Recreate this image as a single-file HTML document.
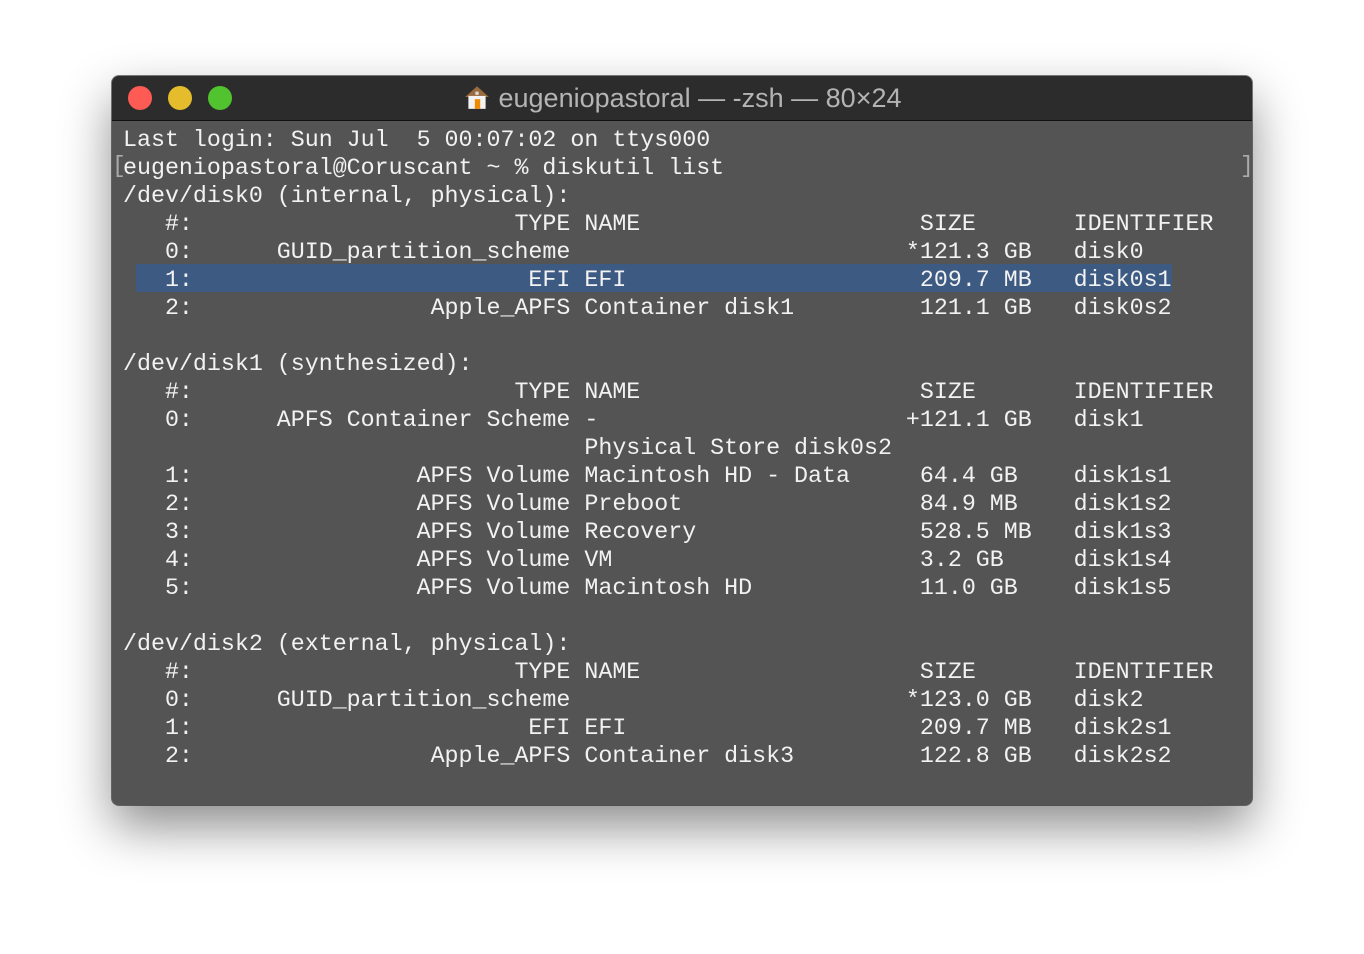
<!DOCTYPE html>
<html><head><meta charset="utf-8"><style>
body{margin:0;width:1364px;height:954px;background:#fff;position:relative;overflow:hidden}
.win{position:absolute;left:112px;top:76px;width:1140px;height:729px;background:#545454;border-radius:7px;overflow:hidden;box-shadow:0 22px 50px rgba(0,0,0,.45),0 0 0 1px rgba(0,0,0,.5)}
.tb{position:absolute;left:0;top:0;width:100%;height:44px;background:#2c2c2c;border-bottom:1px solid #111}
.dot{position:absolute;top:10px;width:24px;height:24px;border-radius:50%}
.title{position:absolute;left:0;right:0;top:7px;text-align:center;font:27px "Liberation Sans",sans-serif;color:#b4b4b4;white-space:nowrap}
pre{position:absolute;left:11px;top:50px;margin:0;font:23.3px/28px "Liberation Mono",monospace;color:#f2f2f2}
.hl{position:absolute;left:24px;top:188px;width:1036px;height:28px;background:#3d5a83}
.br{position:absolute;font:23px/28px "Liberation Mono",monospace;color:#aaa}
</style></head><body>
<div class="win">
<div class="tb">
<div class="dot" style="left:16px;background:#fd5b54"></div>
<div class="dot" style="left:56px;background:#e5bd2c"></div>
<div class="dot" style="left:96px;background:#51c32f"></div>
<div class="title"><svg width="28" height="28" viewBox="0 0 26 26" style="vertical-align:-4px;margin-right:8px"><path d="M2 13 L13 3 L24 13 Z" fill="#9a6b3c"/><rect x="5" y="12" width="16" height="12" fill="#f3f3f3"/><rect x="11" y="15" width="5" height="9" fill="#f08a00"/><rect x="11.5" y="8" width="3" height="3" fill="#ddd"/></svg>eugeniopastoral — -zsh — 80×24</div>
</div>
<div class="hl"></div>
<div class="br" style="left:0;top:76px">[</div>
<div class="br" style="left:1128px;top:76px">]</div>
<pre>Last login: Sun Jul  5 00:07:02 on ttys000
eugeniopastoral@Coruscant ~ % diskutil list
/dev/disk0 (internal, physical):
   #:                       TYPE NAME                    SIZE       IDENTIFIER
   0:      GUID_partition_scheme                        *121.3 GB   disk0
   1:                        EFI EFI                     209.7 MB   disk0s1
   2:                 Apple_APFS Container disk1         121.1 GB   disk0s2

/dev/disk1 (synthesized):
   #:                       TYPE NAME                    SIZE       IDENTIFIER
   0:      APFS Container Scheme -                      +121.1 GB   disk1
                                 Physical Store disk0s2
   1:                APFS Volume Macintosh HD - Data     64.4 GB    disk1s1
   2:                APFS Volume Preboot                 84.9 MB    disk1s2
   3:                APFS Volume Recovery                528.5 MB   disk1s3
   4:                APFS Volume VM                      3.2 GB     disk1s4
   5:                APFS Volume Macintosh HD            11.0 GB    disk1s5

/dev/disk2 (external, physical):
   #:                       TYPE NAME                    SIZE       IDENTIFIER
   0:      GUID_partition_scheme                        *123.0 GB   disk2
   1:                        EFI EFI                     209.7 MB   disk2s1
   2:                 Apple_APFS Container disk3         122.8 GB   disk2s2</pre>
</div>
</body></html>
